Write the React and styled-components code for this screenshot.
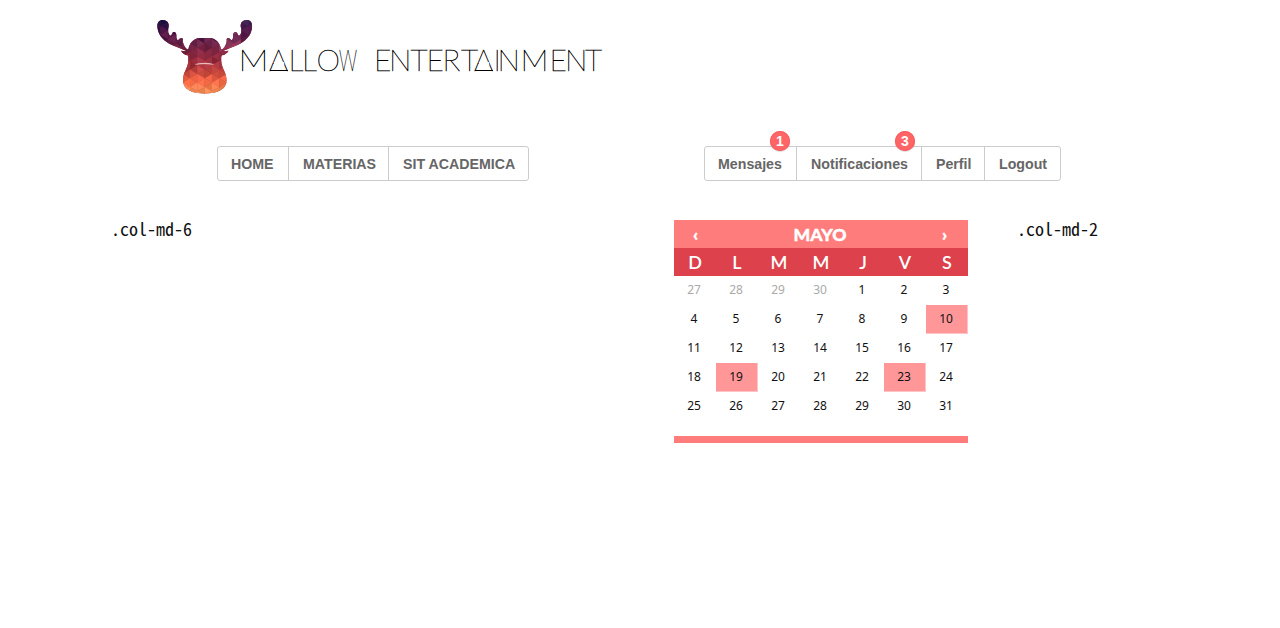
import React from "react";
import styled, { createGlobalStyle } from "styled-components";

const GlobalStyle = createGlobalStyle`
  * { box-sizing: border-box; }
  body { margin: 0; background: #fff; color: #111; }
`;

const Page = styled.div`
  width: 1280px;
  min-height: 628px;
  background: #fff;
`;

const Header = styled.header`
  height: 146px;
  padding: 10px 0 0 150px;
`;

const Brand = styled.div`
  display: flex;
  align-items: flex-start;
`;

const MooseSvg = styled.svg`
  flex: none;
  width: 110px;
  height: 95px;
`;

const WordmarkSvg = styled.svg`
  flex: none;
  width: 370px;
  height: 50px;
  margin: 25px 0 0 -25px;
  font-family: Lato, "Liberation Sans", sans-serif;
  font-weight: 100;
  font-size: 30px;
  fill: #000;
  stroke: #000;
  stroke-width: 0.45;
`;

const NavRow = styled.div`
  display: flex;
  gap: 175px;
  padding-left: 217px;
`;

const Nav = styled.nav`
  display: flex;
  height: 35px;
  border: 1px solid #ccc;
  border-radius: 3px;
`;

const NavItem = styled.a`
  position: relative;
  width: ${(p) => p.$width}px;
  padding-left: ${(p) => p.$inset || 13}px;
  font: bold 14.2px/34px "Liberation Sans", Arial, sans-serif;
  color: #666;
  white-space: nowrap;
  & + & { border-left: 1px solid #ccc; }
`;

const Badge = styled.span`
  position: absolute;
  top: -16px;
  right: 6px;
  width: 20px;
  height: 20px;
  border-radius: 50%;
  background: #ff6567;
  box-shadow: inset 0 0 0 1px #fb5d60, 0 1px 1px rgba(0, 0, 0, 0.15);
  color: #fff;
  font-size: 14px;
  line-height: 21px;
  text-align: center;
`;

const Columns = styled.main`
  display: flex;
  align-items: flex-start;
  padding: 39px 0 0 111px;
`;

const ColumnLabel = styled.div`
  width: ${(p) => p.$width}px;
  font: 18px/16px "Noto Sans Mono CJK SC", "Noto Sans Mono CJK JP", "Liberation Mono", monospace;
`;

const Calendar = styled.section`
  width: 294px;
  margin-right: 49px;
  border-bottom: 7px solid #ff7c7c;
  font-family: "Noto Sans", sans-serif;
`;

const MonthBar = styled.div`
  display: grid;
  grid-template-columns: 43px 1fr 47px;
  height: 28px;
  background: #ff7c7c;
  color: #fff;
  font-family: Lato, sans-serif;
  font-size: 17.6px;
  font-weight: 900;
  -webkit-text-stroke: 0.4px #fff;
  line-height: 29px;
  text-align: center;
`;

const Month = styled.span`
  padding-left: 2px;
`;

const WeekDays = styled.div`
  display: grid;
  grid-template-columns: repeat(7, 42px);
  height: 28px;
  background: #dc414c;
  color: #fff;
  font-family: Lato, sans-serif;
  font-size: 18px;
  font-weight: 600;
  line-height: 29px;
  text-align: center;
`;

const Days = styled.div`
  display: grid;
  grid-template-columns: repeat(7, 42px);
  grid-auto-rows: 29px;
  padding-bottom: 15px;
`;

const Day = styled.div`
  padding-right: 1px;
  border: solid ${(p) => (p.$marked ? "#ffc4c6" : "transparent")};
  border-width: 0 1px 1px 0;
  background: ${(p) => (p.$marked ? "#ff9799" : "transparent")};
  color: ${(p) => (p.$muted ? "#aaa" : "#111")};
  font-size: 12px;
  line-height: 27px;
  text-align: center;
`;

const HALF =
  "M22 50C21 37 29 29 39 30C52 30 60 41 55 55C53 64 55 74 61 77C66 77 65 70 69 67C74 64 78 67 79 74C79 84 80 91 85 90C89 84 96 82 98 86C98 98 101 108 111 118L115 118C118 103 128 84 152 84L165 84L165 251C126 251 99 239 99 211C99 184 115 175 115 149C115 142 115 140 113 136C104 135 97 129 93 122C99 123 105 124 109 123C96 116 80 112 66 105C44 94 24 78 22 50Z";

const STOPS = [
  [25, [35, 28, 78]],
  [65, [76, 22, 72]],
  [100, [98, 32, 70]],
  [130, [128, 36, 62]],
  [160, [160, 48, 62]],
  [190, [205, 76, 62]],
  [215, [246, 104, 66]],
  [250, [255, 150, 92]],
];

function shade(x, y, seed) {
  let i = 0;
  while (i < STOPS.length - 2 && y > STOPS[i + 1][0]) i++;
  const [y0, a] = STOPS[i];
  const [y1, b] = STOPS[i + 1];
  const t = Math.max(0, Math.min(1, (y - y0) / (y1 - y0)));
  const jitter = (((seed * 73) % 17) - 8) * 2.1;
  const lift = x > 210 && x < 280 && y > 55 && y < 125 ? 30 : 0;
  return `rgb(${a
    .map((v, k) => Math.round(v + (b[k] - v) * t + jitter * (k ? 0.7 : 1.3) + lift * (k ? 0.6 : 1)))
    .map((v) => Math.max(0, Math.min(255, v)))
    .join(",")})`;
}

const FACETS = [];
for (let col = 0; col < 15; col++) {
  for (let row = 0; row < 18; row++) {
    const x = 10 + col * 22;
    const y = 10 + row * 26 - (col % 2) * 13;
    FACETS.push({ d: `M${x} ${y}V${y + 26}L${x + 22} ${y + 13}Z`, c: shade(x + 7, y + 13, col * col * 5 + row * 11 + col * row) });
    FACETS.push({ d: `M${x + 22} ${y + 13}V${y + 39}L${x} ${y + 26}Z`, c: shade(x + 15, y + 26, col * 7 + row * row * 3 + 4) });
  }
}

const Moose = () => (
  <MooseSvg viewBox="0 0 330 285" aria-hidden="true">
    <clipPath id="moose">
      <path d={HALF} />
      <path d={HALF} transform="translate(328.5 0) scale(-1 1)" />
    </clipPath>
    <g clipPath="url(#moose)">
      <rect width="330" height="285" fill="#9c3348" />
      {FACETS.map((f, i) => (
        <path key={i} d={f.d} fill={f.c} stroke={f.c} strokeWidth="0.8" />
      ))}
    </g>
    <path d="M136 163Q164 156 191 163Q164 160 136 163Z" fill="#fff" stroke="#ffe6e0" strokeWidth="1" />
  </MooseSvg>
);

/* The A's are closed at the base instead of crossed. */
const Wordmark = () => (
  <WordmarkSvg viewBox="0 0 370 50">
    <text y="36">
      <tspan x="3.5" textLength="30" lengthAdjust="spacingAndGlyphs">M</tspan>
      <tspan x="34 53.5 67 81.5">ALLO</tspan>
      <tspan x="104" textLength="18" lengthAdjust="spacingAndGlyphs">W</tspan>
    </text>
    <text y="36">
      <tspan x="139 154 175.5 191.5 207.5 226 239 258.5 262.5">ENTERTAIN</tspan>
      <tspan x="285.5" textLength="28" lengthAdjust="spacingAndGlyphs">M</tspan>
      <tspan x="314.5 330 350">ENT</tspan>
    </text>
    {[44, 249].map((x) => (
      <g key={x}>
        <path d={`M${x - 5.2} 28.6h10.4`} stroke="#fff" strokeWidth="3" />
        <path d={`M${x - 9} 35.5h18`} strokeWidth="1" />
      </g>
    ))}
  </WordmarkSvg>
);

const PREVIOUS = [27, 28, 29, 30];
const MONTH = Array.from({ length: 31 }, (_, i) => i + 1);
const MARKED = [10, 19, 23];

export default function App() {
  return (
    <Page>
      <GlobalStyle />
      <Header>
        <Brand>
          <Moose />
          <Wordmark />
        </Brand>
      </Header>
      <NavRow>
        <Nav>
          <NavItem $width={70}>HOME</NavItem>
          <NavItem $width={100} $inset={14}>MATERIAS</NavItem>
          <NavItem $width={140} $inset={14}>SIT ACADEMICA</NavItem>
        </Nav>
        <Nav>
          <NavItem $width={91}>Mensajes<Badge>1</Badge></NavItem>
          <NavItem $width={125} $inset={14}>Notificaciones<Badge>3</Badge></NavItem>
          <NavItem $width={63} $inset={14}>Perfil</NavItem>
          <NavItem $width={76} $inset={14}>Logout</NavItem>
        </Nav>
      </NavRow>
      <Columns>
        <ColumnLabel $width={563}>.col-md-6</ColumnLabel>
        <Calendar>
          <MonthBar>
            <span>‹</span>
            <Month>MAYO</Month>
            <span>›</span>
          </MonthBar>
          <WeekDays>
            {"DLMMJVS".split("").map((d, i) => <span key={i}>{d}</span>)}
          </WeekDays>
          <Days>
            {PREVIOUS.map((d) => <Day key={`p${d}`} $muted>{d}</Day>)}
            {MONTH.map((d) => <Day key={d} $marked={MARKED.includes(d)}>{d}</Day>)}
          </Days>
        </Calendar>
        <ColumnLabel $width={100}>.col-md-2</ColumnLabel>
      </Columns>
    </Page>
  );
}
